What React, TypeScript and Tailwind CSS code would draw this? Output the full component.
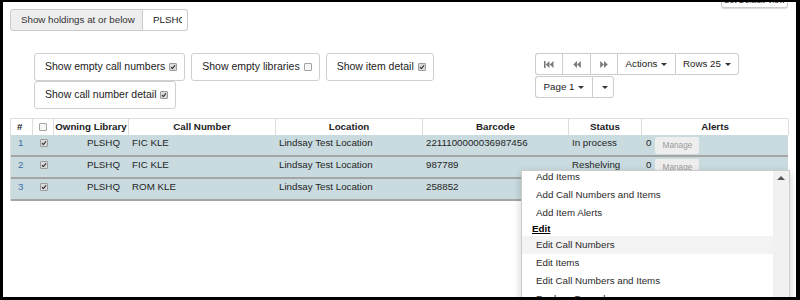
import React from "react";

const Box = ({ checked }: { checked?: boolean }) => (
  <span
    className={
      checked
        ? "inline-flex h-[8px] w-[8px] shrink-0 items-center justify-center rounded-[1px] border border-[#9c9c9c] bg-[#dadada]"
        : "inline-flex h-[8px] w-[8px] shrink-0 items-center justify-center rounded-[1px] border border-[#a4a4a4] bg-[#f5f5f5]"
    }
  >
    {checked && (
      <svg viewBox="0 0 8 8" className="h-[6px] w-[6px]">
        <path d="M1.3 4.3 L3.2 6 L6.7 1.8" stroke="#2b2b2b" strokeWidth="1.5" fill="none" />
      </svg>
    )}
  </span>
);

const Caret = () => (
  <span className="ml-[4px] inline-block h-0 w-0 border-x-[3px] border-t-[3px] border-x-transparent border-t-[#333]" />
);

const FastBack = () => (
  <svg viewBox="0 0 10 7" className="h-[7px] w-[10px]" fill="#7a7a7a">
    <rect x="0" y="0" width="1.6" height="7" />
    <polygon points="5.5,0 1.8,3.5 5.5,7" />
    <polygon points="9.5,0 5.8,3.5 9.5,7" />
  </svg>
);

const Back = () => (
  <svg viewBox="0 0 8 7" className="h-[7px] w-[8px]" fill="#7a7a7a">
    <polygon points="4,0 0.3,3.5 4,7" />
    <polygon points="7.8,0 4.1,3.5 7.8,7" />
  </svg>
);

const Fwd = () => (
  <svg viewBox="0 0 8 7" className="h-[7px] w-[8px]" fill="#7a7a7a">
    <polygon points="0.2,0 3.9,3.5 0.2,7" />
    <polygon points="4,0 7.7,3.5 4,7" />
  </svg>
);

const ToggleBtn = ({ label, checked }: { label: string; checked?: boolean }) => (
  <div className="flex h-[28px] items-center gap-[4px] rounded-[3px] border border-[#cfcfcf] bg-white pl-[10px] pr-[7px] text-[10.5px] text-[#222]">
    <span>{label}</span>
    <Box checked={checked} />
  </div>
);

const rows = [
  { n: 1, lib: "PLSHQ", call: "FIC KLE", loc: "Lindsay Test Location", bc: "2211100000036987456", status: "In process", alert: true },
  { n: 2, lib: "PLSHQ", call: "FIC KLE", loc: "Lindsay Test Location", bc: "987789", status: "Reshelving", alert: true },
  { n: 3, lib: "PLSHQ", call: "ROM KLE", loc: "Lindsay Test Location", bc: "258852", status: "", alert: false },
];

const grid = "grid grid-cols-[22px_21px_75px_147px_147px_146px_73px_147px]";

const menu = [
  { label: "Add Items" },
  { label: "Add Call Numbers and Items" },
  { label: "Add Item Alerts" },
  { label: "Edit", header: true },
  { label: "Edit Call Numbers", active: true },
  { label: "Edit Items" },
  { label: "Edit Call Numbers and Items" },
  { label: "Replace Barcode" },
];

export default function App() {
  return (
    <div className="h-[300px] w-[800px] bg-black pt-[2px] pl-[3px] pr-[4px] pb-[3px]">
      <div className="relative h-full overflow-hidden bg-white font-[family-name:'Liberation_Sans',Arial,sans-serif] text-[#333]">
        {/* top bar */}
        <div className="flex items-start justify-between pl-[7px] pr-[8px]">
          <div className="mt-[7px] flex h-[22px] text-[9.75px]">
            <div className="flex w-[133px] items-center rounded-l-[3px] border border-[#cccccc] bg-[#eeeeee] pl-[10px]">
              Show holdings at or below
            </div>
            <div className="flex w-[45px] items-center overflow-hidden whitespace-nowrap rounded-r-[3px] border border-l-0 border-[#cccccc] pl-[10px] text-[#222]">
              <span className="w-[29px] shrink-0 overflow-hidden">PLSHQ</span>
            </div>
          </div>
          <div className="-mt-[8px] flex h-[14px] w-[67px] items-center justify-center rounded-[3px] border border-[#cccccc] bg-white text-[8.25px] whitespace-nowrap shadow-[0_1px_1px_rgba(0,0,0,0.15)]">
            Set Default View
          </div>
        </div>

        {/* toggles + pager */}
        <div className="mt-[22px] flex items-start">
          <div className="ml-[31px] flex w-[420px] flex-wrap gap-x-[6px]">
            <ToggleBtn label="Show empty call numbers" checked />
            <ToggleBtn label="Show empty libraries" />
            <ToggleBtn label="Show item detail" checked />
            <ToggleBtn label="Show call number detail" checked />
          </div>
          <div className="ml-[81px] text-[9.75px] text-[#222]">
            <div className="flex h-[22px]">
              <div className="flex w-[27px] items-center justify-center rounded-l-[3px] border border-r-0 border-[#cccccc]">
                <FastBack />
              </div>
              <div className="flex w-[28px] items-center justify-center border border-r-0 border-[#cccccc]">
                <Back />
              </div>
              <div className="flex w-[27px] items-center justify-center border border-r-0 border-[#cccccc]">
                <Fwd />
              </div>
              <div className="flex w-[58px] items-center justify-center border border-r-0 border-[#cccccc]">
                Actions
                <Caret />
              </div>
              <div className="flex w-[64px] items-center justify-center rounded-r-[3px] border border-[#cccccc]">
                Rows 25
                <Caret />
              </div>
            </div>
            <div className="mt-[1px] flex h-[22px]">
              <div className="flex w-[57px] items-center justify-center rounded-l-[3px] border border-r-0 border-[#cccccc]">
                Page 1
                <Caret />
              </div>
              <div className="flex w-[22px] items-center justify-center rounded-r-[3px] border border-[#cccccc]">
                <Caret />
              </div>
            </div>
          </div>
        </div>

        {/* table */}
        <div className="ml-[7px] mt-[9px] w-[778px] border-l border-[#dddddd] text-[9.75px]">
          <div className={`${grid} h-[17px] border-t border-[#dddddd] font-bold text-[#222]`}>
            <div className="flex items-center border-r border-[#dddddd] pl-[6px]">#</div>
            <div className="flex items-center justify-center border-r border-[#dddddd]">
              <Box />
            </div>
            <div className="flex items-center justify-center border-r border-[#dddddd] whitespace-nowrap">Owning Library</div>
            <div className="flex items-center justify-center border-r border-[#dddddd]">Call Number</div>
            <div className="flex items-center justify-center border-r border-[#dddddd]">Location</div>
            <div className="flex items-center justify-center border-r border-[#dddddd]">Barcode</div>
            <div className="flex items-center justify-center border-r border-[#dddddd]">Status</div>
            <div className="flex items-center justify-center border-r border-[#dddddd]">Alerts</div>
          </div>
          {rows.map((r) => (
            <div key={r.n} className={`${grid} h-[22px] border-b-2 border-[#a5a5a5] bg-[#c9dbdf] leading-[12px] text-[#1f1f1f]`}>
              <div className="pl-[7px] pt-[2px] text-[#3a6ea5]">{r.n}</div>
              <div className="flex justify-center pt-[4px]">
                <Box checked />
              </div>
              <div className="pr-[9px] pt-[2px] text-right">{r.lib}</div>
              <div className="pl-[3px] pt-[2px]">{r.call}</div>
              <div className="pl-[3px] pt-[2px]">{r.loc}</div>
              <div className="pl-[3px] pt-[2px]">{r.bc}</div>
              <div className="pl-[3px] pt-[2px]">{r.status}</div>
              <div className="flex items-start pl-[4px] pt-[2px]">
                {r.alert && (
                  <>
                    <span>0</span>
                    <span className="ml-[4px] flex h-[17px] w-[44px] items-center justify-center rounded-[2px] bg-[#eeeeee] text-[8.25px] text-[#9a9a9a]">
                      Manage
                    </span>
                  </>
                )}
              </div>
            </div>
          ))}
        </div>

        {/* actions dropdown */}
        <div className="absolute left-[518px] top-[168px] flex h-[140px] w-[269px] overflow-hidden border border-[#cccccc] bg-white text-[9.75px] shadow-[0_3px_8px_rgba(0,0,0,0.2)]">
          <div className="-mt-[3px] flex-1">
            {menu.map((m) =>
              m.header ? (
                <div key={m.label} className="flex h-[14px] items-center pl-[10px] font-bold text-black underline">
                  {m.label}
                </div>
              ) : (
                <div
                  key={m.label}
                  className={
                    m.active
                      ? "flex h-[18px] items-center bg-[#f3f3f3] pl-[14px] text-[#2a2a2a]"
                      : "flex h-[18px] items-center pl-[14px] text-[#2a2a2a]"
                  }
                >
                  {m.label}
                </div>
              )
            )}
          </div>
          <div className="flex w-[16px] justify-center bg-[#f1f1f1] pt-[5px]">
            <span className="inline-block h-0 w-0 border-x-[4px] border-b-[4px] border-x-transparent border-b-[#555]" />
          </div>
        </div>
      </div>
    </div>
  );
}
